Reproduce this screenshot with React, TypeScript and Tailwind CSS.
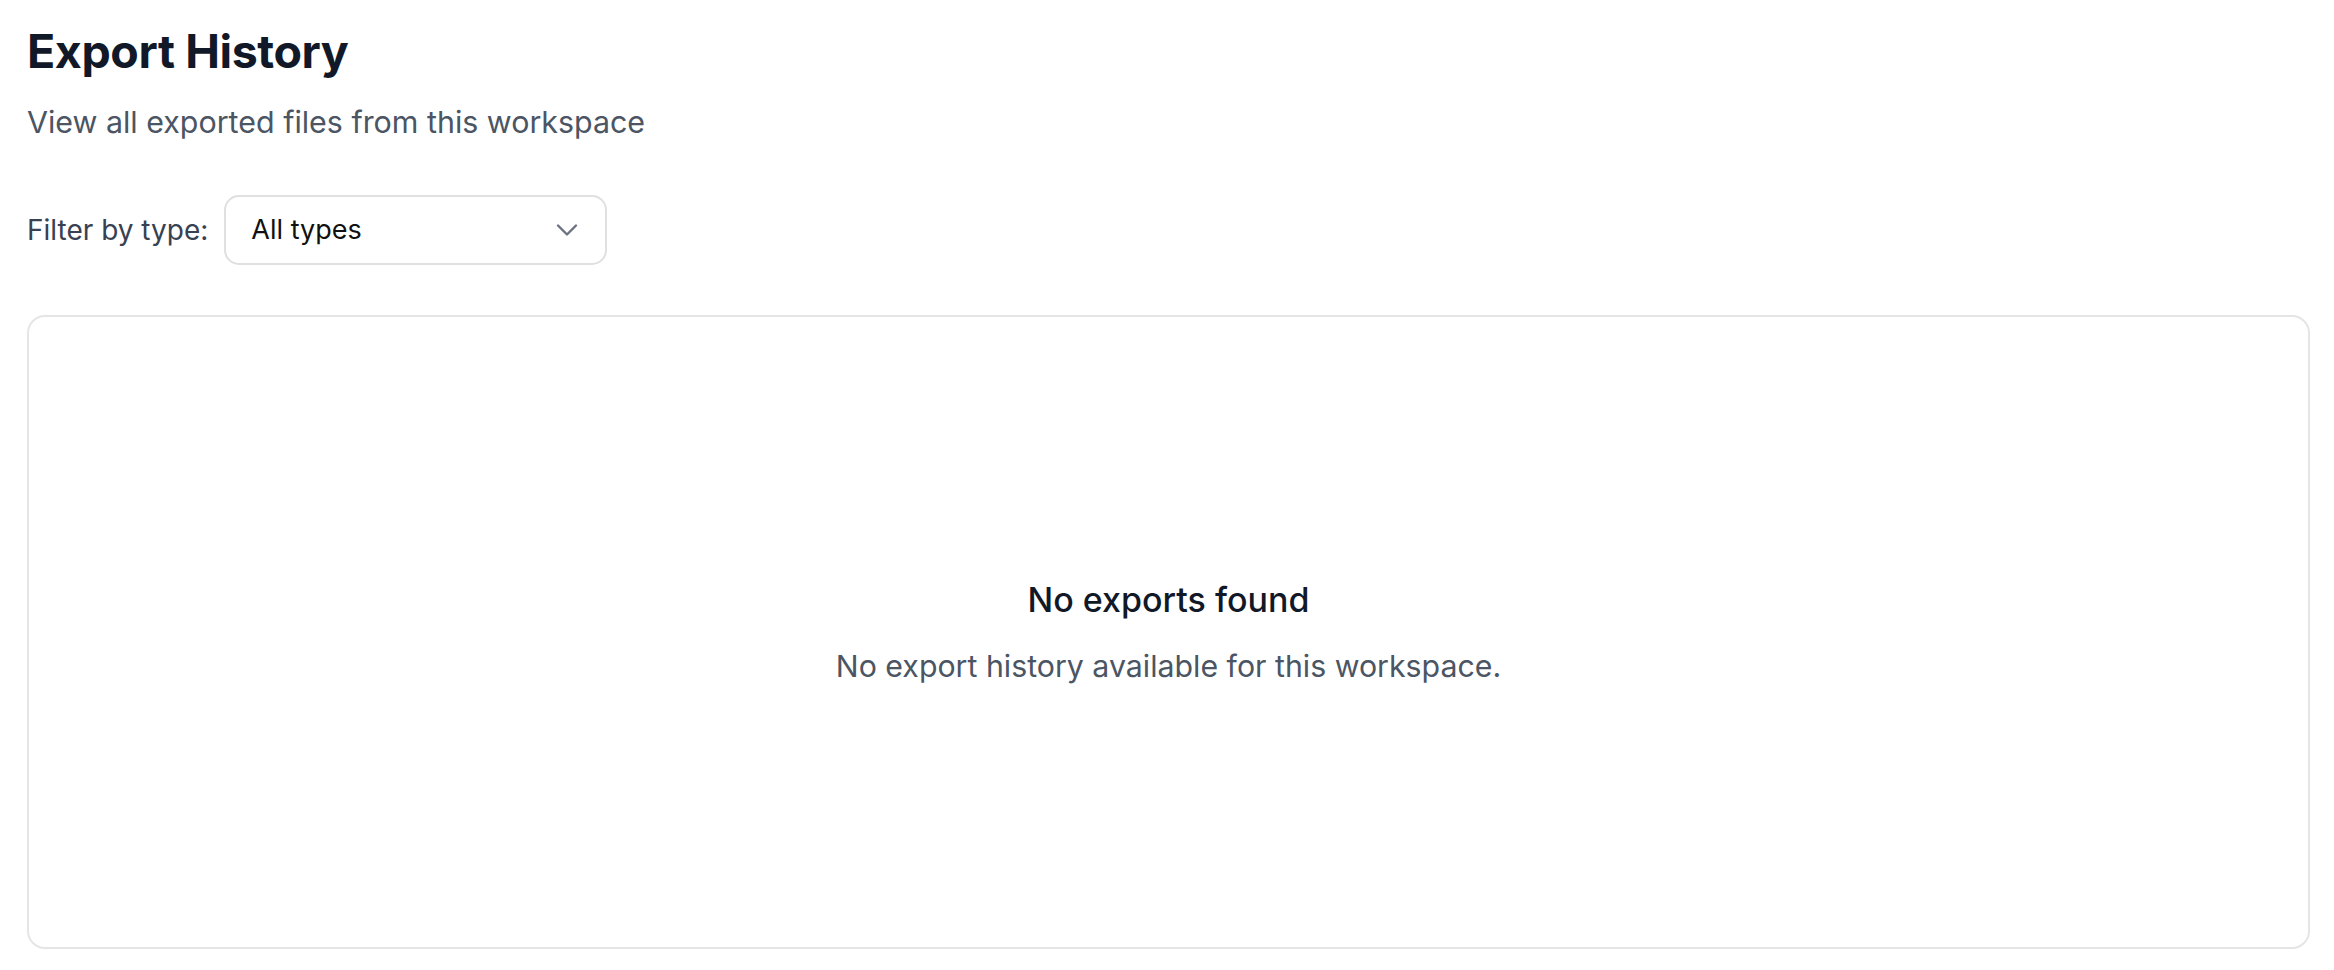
import { ChevronDown } from "lucide-react";

export default function App() {
  return (
    <div className="min-h-screen bg-white px-[27px] pt-[23px] font-['Inter',sans-serif]">
      <h1 className="text-[46.5px] font-bold leading-[56px] tracking-[-0.4px] text-[#111827]">
        Export History
      </h1>
      <p className="mt-[25px] text-[30.4px] leading-[36px] text-[#4b5563]">
        View all exported files from this workspace
      </p>

      {/* Filter */}
      <div className="mt-[55px] flex items-center gap-[16px]">
        <span className="text-[28px] leading-[36px] text-[#374151]">Filter by type:</span>
        <button
          type="button"
          className="flex h-[70px] w-[383px] items-center justify-between rounded-[15px] border-2 border-[#e0e0e0] bg-white pl-[25px] pr-[20px] text-[27px] text-[#111111]"
        >
          All types
          <ChevronDown className="h-[36px] w-[36px] text-[#6b7280]" strokeWidth={1.6} />
        </button>
      </div>

      {/* Empty state */}
      <div className="mt-[50px] flex h-[634px] w-[2283px] flex-col items-center justify-center rounded-[18px] border-2 border-[#e5e5e5]">
        <h2 className="text-[34px] font-medium leading-[40px] text-[#111827]">No exports found</h2>
        <p className="mt-[28px] text-[30.3px] leading-[36px] text-[#4b5563]">
          No export history available for this workspace.
        </p>
      </div>
    </div>
  );
}
